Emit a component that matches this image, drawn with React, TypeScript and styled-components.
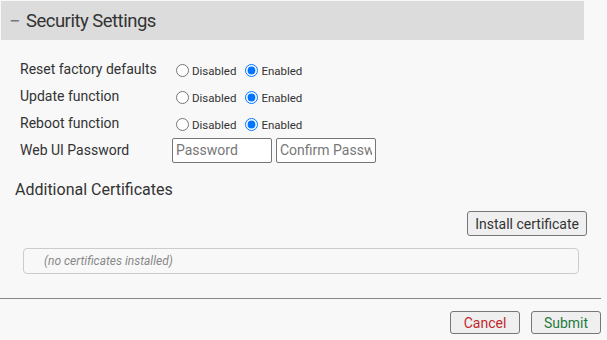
import styled, { createGlobalStyle } from "styled-components"

const GlobalStyle = createGlobalStyle`
  body {
    margin: 0;
    background: #f8f8f8;
    font-family: Roboto, "Liberation Sans", sans-serif;
    color: #333;
  }
`

// Styles
const Page = styled.div`
  width: 601px;
  padding-top: 1px;
`
const Header = styled.div`
  align-items: center;
  background: #dcdcdc;
  display: flex;
  font-size: 18.5px;
  height: 39px;
  letter-spacing: -0.5px;
  margin-left: 1px;
  padding-left: 8px;
  width: 575px;
`
const Dash = styled.span`
  color: #777;
  font-size: 20px;
  margin-right: 6px;
`
const Form = styled.div`
  display: flex;
  flex-direction: column;
  gap: 7px;
  padding: 19px 0 0 20px;
`
const Row = styled.div`
  align-items: center;
  display: flex;
  height: 20px;
`
const Label = styled.div`
  font-size: 14px;
  width: 152px;
`
const RadioLabel = styled.label`
  align-items: center;
  display: flex;
  font-size: 11.5px;
  margin-right: 5px;
  margin-top: 3px;
  input { margin: 0 3px 0 4px; width: 13px; height: 13px; }
`
const TextInput = styled.input`
  background: #fff;
  border: 1px solid #767676;
  border-radius: 2px;
  box-sizing: border-box;
  color: #333;
  font-family: inherit;
  font-size: 14px;
  height: 25px;
  margin-right: 4px;
  padding: 0 3px;
  width: 100px;
  &::placeholder { color: #777; }
`
const SectionTitle = styled.div`
  font-size: 16px;
  margin: 20px 0 0 15px;
`
const Toolbar = styled.div`
  display: flex;
  justify-content: flex-end;
  margin: 12px 14px 0 0;
`
const Button = styled.button<{ $tone?: string; $h?: number }>`
  background: #efefef;
  border: 1px solid #767676;
  border-radius: 3px;
  box-sizing: border-box;
  color: ${p => p.$tone || "#333"};
  font-family: inherit;
  font-size: 14px;
  height: ${p => p.$h || 25}px;
  padding: 0 7px;
`
const FooterButton = styled(Button)`
  min-width: 70px;
  padding: 0 11px;
`
const CertList = styled.div`
  align-items: center;
  border: 1px solid #ccc;
  border-radius: 4px;
  box-sizing: border-box;
  color: #888;
  display: flex;
  font-size: 12px;
  font-style: italic;
  height: 26px;
  margin: 12px 22px 0 23px;
  padding-left: 20px;
`
const Divider = styled.hr`
  border: none;
  border-top: 1px solid #888;
  margin: 24px 0 0;
`
const Footer = styled.div`
  display: flex;
  gap: 11px;
  justify-content: flex-end;
  padding-top: 12px;
`

const RADIO_ROWS = ["Reset factory defaults", "Update function", "Reboot function"]

const App: React.FC = () => {
  return (
    <Page>
      <GlobalStyle />
      <Header><Dash>−</Dash>Security Settings</Header>
      <Form>
        {RADIO_ROWS.map(name => (
          <Row key={name}>
            <Label>{name}</Label>
            <RadioLabel><input type="radio" name={name} />Disabled</RadioLabel>
            <RadioLabel><input type="radio" name={name} defaultChecked />Enabled</RadioLabel>
          </Row>
        ))}
        <Row>
          <Label>Web UI Password</Label>
          <TextInput type="password" placeholder="Password" />
          <TextInput type="password" placeholder="Confirm Password" />
        </Row>
      </Form>
      <SectionTitle>Additional Certificates</SectionTitle>
      <Toolbar><Button>Install certificate</Button></Toolbar>
      <CertList>(no certificates installed)</CertList>
      <Divider />
      <Footer>
        <FooterButton $tone="#c0272d" $h={23}>Cancel</FooterButton>
        <FooterButton $tone="#1f7a3e" $h={23}>Submit</FooterButton>
      </Footer>
    </Page>
  )
}

export default App
